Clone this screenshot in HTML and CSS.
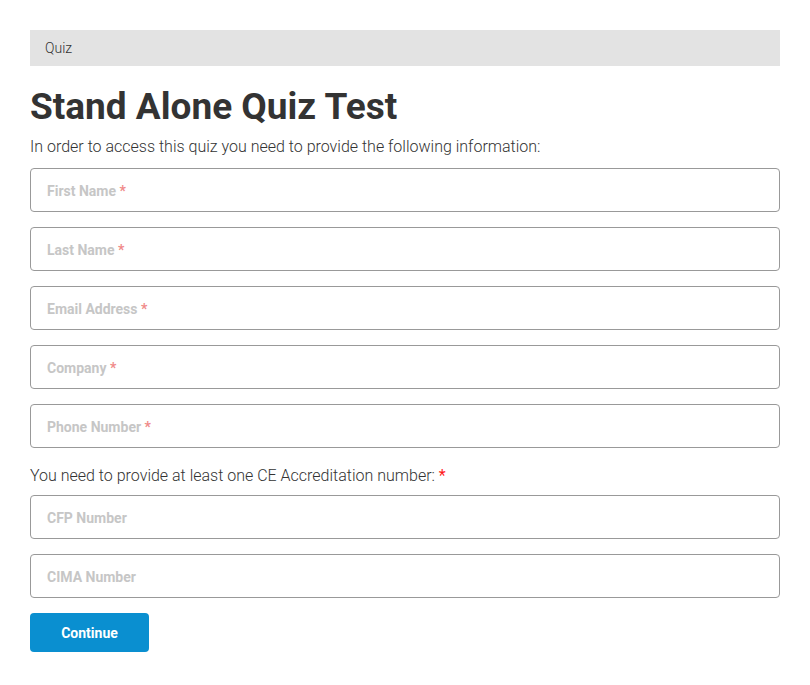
FILE: index.html
```html
<!DOCTYPE html>
<html lang="en">
<head>
<meta charset="utf-8">
<title>Stand Alone Quiz Test</title>
<link rel="stylesheet" href="styles.css">
</head>
<body>
<div class="page">
  <nav class="breadcrumb">Quiz</nav>
  <h1 class="title">Stand Alone Quiz Test</h1>
  <p class="intro">In order to access this quiz you need to provide the following information:</p>
  <form class="form">
    <div class="field"><span class="ph">First Name <span class="req">*</span></span></div>
    <div class="field"><span class="ph">Last Name <span class="req">*</span></span></div>
    <div class="field"><span class="ph">Email Address <span class="req">*</span></span></div>
    <div class="field"><span class="ph">Company <span class="req">*</span></span></div>
    <div class="field field-last"><span class="ph">Phone Number <span class="req">*</span></span></div>
    <p class="note">You need to provide at least one CE Accreditation number: <span class="req-strong">*</span></p>
    <div class="field"><span class="ph">CFP Number</span></div>
    <div class="field"><span class="ph">CIMA Number</span></div>
    <div class="actions"><button type="button" class="btn">Continue</button></div>
  </form>
</div>
</body>
</html>
```
FILE: styles.css
```css
* { box-sizing: border-box; }
body {
  margin: 0;
  background: #fff;
  font-family: Roboto, "Noto Sans", Arial, sans-serif;
  color: #333;
}
.page {
  padding: 30px 30px 0 30px;
}
.breadcrumb {
  background: #e3e3e3;
  height: 36px;
  display: flex;
  align-items: center;
  padding-left: 15px;
  font-size: 14px;
  font-weight: 300;
  color: #333;
}
.title {
  margin: 20px 0 0 0;
  font-size: 37px;
  font-weight: 700;
  line-height: 42px;
  color: #333;
}
.intro {
  margin: 8px 0 10px 0;
  font-size: 16px;
  font-weight: 300;
  line-height: 22px;
}
.form {
  display: flex;
  flex-direction: column;
}
.field {
  height: 44px;
  border: 1px solid #999;
  border-radius: 4px;
  display: flex;
  align-items: center;
  padding: 2px 0 0 16px;
  margin-bottom: 15px;
}
.field-last { margin-bottom: 0; }
.ph {
  font-size: 14px;
  font-weight: 700;
  color: #c6c6c6;
}
.req { color: #f08a8a; }
.note {
  margin: 17px 0 8px 0;
  font-size: 16px;
  font-weight: 300;
  line-height: 22px;
}
.req-strong { color: #ff1a1a; font-weight: 400; }
.actions { display: flex; }
.btn {
  width: 119px;
  height: 39px;
  background: #0a8fd0;
  border: none;
  border-radius: 4px;
  color: #fff;
  font-family: Roboto, "Noto Sans", Arial, sans-serif;
  font-size: 14px;
  font-weight: 700;
}
```
